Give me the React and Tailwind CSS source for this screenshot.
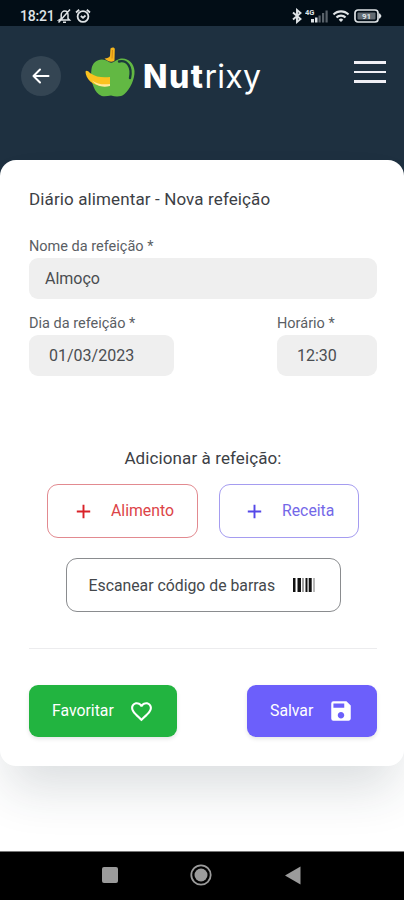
import React from "react";
import { MdAdd, MdFavoriteBorder, MdSave, MdWifi } from "react-icons/md";

function StatusBar() {
  return (
    <div className="flex h-[26px] shrink-0 items-center justify-between bg-[#020d16] pl-[20px] pr-[22px] pt-[5px] text-[#dfe3e6]">
      <div className="flex items-center">
        <span className="w-[35px] text-[14px] leading-[20px] font-medium tracking-[-0.2px] whitespace-nowrap">18:21</span>
        <svg className="ml-[2px]" width="15" height="16" viewBox="0 0 15 16" fill="none" stroke="currentColor" strokeWidth="1.5">
          <path d="M2 12h10.500l-1.500-1.500V7c0-2.200-1.300-4-3.200-4S4.200 4.800 4.200 7v3.500zM6 14.300h3M1.500 14.500 13 1.500" />
        </svg>
        <svg className="ml-[3px]" width="16" height="16" viewBox="0 0 16 16" fill="none" stroke="currentColor" strokeWidth="1.800">
          <circle cx="8" cy="8.500" r="5.400" />
          <path d="M1 4.500 4.200 1.800M15 4.500 11.800 1.800M5.800 8 8 9.800 10.500 7.500" />
        </svg>
      </div>
      <div className="flex items-center">
        <svg className="mr-[2px]" width="12" height="16" viewBox="0 0 12 16" fill="none" stroke="currentColor" strokeWidth="1.900">
          <path d="M2 4.500 9.500 11 6 14V2l3.500 3L2 11.500" />
        </svg>
        <svg width="25" height="16" viewBox="0 0 25 16">
          <text x="0" y="7" fontSize="7.500" fontWeight="700" fill="currentColor" fontFamily="Roboto, sans-serif">4G</text>
          <path d="M6 11h3v3.500H6zM10 9.500h2.500v5H10z" fill="currentColor" />
          <path d="M13.500 7.500h2.200v7h-2.200zM17 5h2.200v9.500H17zM20.500 2.500h2.200v12h-2.200z" fill="#59626a" />
        </svg>
        <MdWifi size={18} className="ml-[2px]" />
        <svg className="ml-[4px]" width="28" height="14" viewBox="0 0 28 14">
          <rect x="1" y="1" width="23" height="12" rx="3" fill="none" stroke="currentColor" strokeWidth="1.700" />
          <path d="M25 4.500h1l1.500 2.500-1.500 2.500h-1z" fill="currentColor" />
          <rect x="3.500" y="3.500" width="18" height="7" rx="1" fill="#626b72" />
          <text x="12.500" y="10" fontSize="8" fontWeight="700" textAnchor="middle" fill="currentColor" fontFamily="Roboto, sans-serif">91</text>
        </svg>
      </div>
    </div>
  );
}

function AppleLogo() {
  return (
    <svg width="52" height="52" viewBox="0 0 52 52">
      <path d="M25 15.500C17 9.500 8 13 6.500 22C5 31 8 43 14 47.500C18 50.500 22 49 26 48.500C31 50 36 50 39.500 47C45 42 50 32 49.500 24C49 14 39 8 31 13.500C29 15 27 16 25 15.500Z" fill="#62b843" />
      <path d="M34 14.500C42 12.500 47.500 20 45 31" fill="none" stroke="#1b3a3c" strokeWidth="2.400" strokeLinecap="round" />
      <path d="M25.500 1.500C27 0 29.500 0 29.800 2L29.500 13.500C27 16 22 14 19.500 11.500C22 11.500 24.500 10.500 25 9Z" fill="#f5b51d" />
      <path d="M27.500 3 27 11.500" stroke="#d48914" strokeWidth="1" />
      <path d="M.5 24.500C1.500 23 3 24 5 26C11 30.500 18 30.500 25 30V38.500C16 41 3 37 .8 27Z" fill="#fbc21f" />
      <path d="M7 33.500C12 37 18 38 25 37V39C17 41 11 38.500 7 33.500Z" fill="#ffe99b" />
    </svg>
  );
}

function Header() {
  return (
    <header className="flex h-[134px] shrink-0 items-start justify-between bg-[#1e3040] pl-[21px] pr-[18px] pt-[21px]">
      <div className="flex items-start">
        <button className="mt-[9px] flex h-[40px] w-[40px] items-center justify-center rounded-full bg-[#344553]">
          <svg width="18" height="16" viewBox="0 0 18 16" fill="none" stroke="white" strokeWidth="2" strokeLinecap="round" strokeLinejoin="round">
            <path d="M16.500 8H1.500M8 1.500 1.500 8 8 14.500" />
          </svg>
        </button>
        <div className="ml-[24px] flex">
          <AppleLogo />
          <div className="ml-[6px] mt-[10px] w-[122px] font-['Inter',sans-serif] text-[32px] leading-[40px] tracking-[0.2px] whitespace-nowrap text-white">
            <span className="font-extrabold tracking-[1.5px]">Nut</span>rixy
          </div>
        </div>
      </div>
      <button className="mt-[14px] flex w-[32px] flex-col gap-[7px]">
        <span className="h-[2.500px] w-full bg-[#f0eff5]" />
        <span className="h-[2.500px] w-full bg-[#f0eff5]" />
        <span className="h-[2.500px] w-full bg-[#f0eff5]" />
      </button>
    </header>
  );
}

function Field({ label, value, className, inset }) {
  return (
    <div className={className}>
      <div className="h-[20px] pt-px text-[14.5px] leading-[20px] whitespace-nowrap text-[#5a5e64]">{label}</div>
      <div className={"mt-[2px] flex h-[41px] items-center rounded-[9px] bg-[#efefef] text-[16px] text-[#4a4d51] " + inset}>{value}</div>
    </div>
  );
}

function Barcode() {
  return (
    <svg width="22" height="14" viewBox="0 0 22 14" fill="#111">
      <path d="M0 0h2.500v14H0zM4.500 0h3.500v14h-3.500zM12.500 0h2v14h-2zM15.700 0h3v14h-3z" />
      <path d="M9.300 0h1.400v14h-1.400zM20.500 0h1v14h-1z" fill="#777" />
    </svg>
  );
}

function Card() {
  return (
    <main className="relative h-[606px] rounded-[16px] bg-white pl-[29px] pr-[27px] pt-[27px] shadow-[0_30px_50px_-8px_rgba(30,48,64,0.160)]">
      <h1 className="h-[24px] text-[17px] leading-[24px] tracking-[0.12px] whitespace-nowrap text-[#3c4045]">Diário alimentar - Nova refeição</h1>
      <Field label="Nome da refeição *" value="Almoço" className="mt-[25px]" inset="pl-[16px]" />
      <div className="mt-[14px] flex justify-between">
        <Field label="Dia da refeição *" value="01/03/2023" className="w-[145px]" inset="pl-[20px]" />
        <Field label="Horário *" value="12:30" className="w-[100px]" inset="pl-[20px]" />
      </div>
      <div className="mt-[70px] h-[24px] text-center text-[17px] leading-[24px] tracking-[0.1px] text-[#3c4045]">Adicionar à refeição:</div>
      <div className="mt-[14px] flex justify-center gap-[21px]">
        <button className="flex h-[54px] w-[151px] items-center rounded-[11px] border border-[#e28a90] pl-[24px] text-[15.8px] text-[#dc4448]">
          <MdAdd size={23} color="#d92228" />
          <span className="ml-[16px]">Alimento</span>
        </button>
        <button className="flex h-[54px] w-[140px] items-center rounded-[11px] border border-[#a59cf0] pl-[23px] text-[15.8px] text-[#7468e8]">
          <MdAdd size={23} color="#5548e8" />
          <span className="ml-[16px]">Receita</span>
        </button>
      </div>
      <button className="mx-auto mt-[20px] flex h-[54px] w-[275px] items-center rounded-[11px] border border-[#8a8c8f] pl-[22px] text-[15.8px] text-[#44484c]">
        <span className="w-[204px] pt-px text-left whitespace-nowrap">Escanear código de barras</span>
        <Barcode />
      </button>
      <hr className="mt-[36px] border-[#ececee]" />
      <div className="mt-[36px] flex justify-between">
        <button className="flex h-[52px] w-[148px] items-center rounded-[9px] bg-[#22b440] pl-[23px] text-[15.8px] text-white shadow-[0_2px_4px_rgba(0,0,0,0.100)]">
          <span className="w-[77px] text-left">Favoritar</span>
          <MdFavoriteBorder size={25} />
        </button>
        <button className="flex h-[52px] w-[130px] items-center rounded-[9px] bg-[#6c5ffb] pl-[23px] text-[15.8px] text-white shadow-[0_2px_4px_rgba(0,0,0,0.100)]">
          <span className="w-[58px] text-left">Salvar</span>
          <MdSave size={26} />
        </button>
      </div>
    </main>
  );
}

function NavBar() {
  return (
    <nav className="relative flex h-[49px] shrink-0 items-center border-t border-[#777] bg-black pl-[102px] pb-[2px]">
      <span className="h-[16px] w-[16px] rounded-[2px] bg-[#9b9b9b]" />
      <svg className="ml-[72px]" width="22" height="22" viewBox="0 0 22 22">
        <circle cx="11" cy="11" r="9.700" fill="none" stroke="#9b9b9b" strokeWidth="1.800" />
        <circle cx="11" cy="11" r="6.500" fill="#9b9b9b" />
      </svg>
      <svg className="ml-[73px]" width="16" height="19" viewBox="0 0 16 19">
        <path d="M15.500.500v18L0 9.500z" fill="#9b9b9b" />
      </svg>
    </nav>
  );
}

export default function App() {
  return (
    <div className="flex h-[900px] w-[404px] flex-col overflow-hidden bg-white font-['Roboto',sans-serif]">
      <StatusBar />
      <Header />
      <div className="min-h-0 flex-1 bg-[linear-gradient(#1e3040_20px,transparent_20px)]">
        <Card />
      </div>
      <NavBar />
    </div>
  );
}
